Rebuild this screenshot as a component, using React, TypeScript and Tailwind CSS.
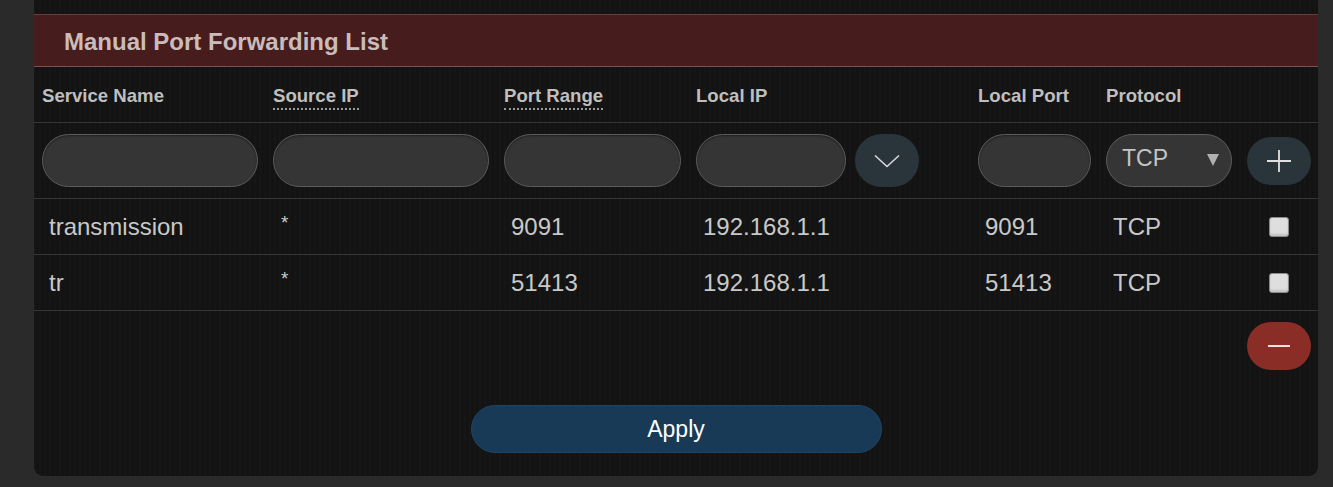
import React from "react";

const cols = "grid grid-cols-[231px_231px_192px_282px_128px_141px_79px]";

function Field({ w }: { w: string }) {
  return (
    <div
      className={`${w} h-[53px] rounded-full bg-[#353535] border border-[#5c5c5c] shadow-[inset_0_1px_2px_rgba(0,0,0,0.4)]`}
    />
  );
}

function Check() {
  return (
    <div className="w-[20px] h-[20px] rounded-[3px] bg-[#dedede] border border-[#8a8a8a] shadow-[inset_0_-2px_2px_rgba(0,0,0,0.12)]" />
  );
}

export default function App() {
  const rows = [
    ["transmission", "*", "9091", "192.168.1.1", "9091", "TCP"],
    ["tr", "*", "51413", "192.168.1.1", "51413", "TCP"],
  ];
  return (
    <div
      className="w-full h-[487px] bg-[#2a2a2a] pl-[34px] pr-[15px] pb-[11px] flex"
      style={{ fontFamily: '"Liberation Sans", Arial, sans-serif' }}
    >
      <div className="flex-1 flex flex-col rounded-b-[9px] bg-[#131313] bg-[repeating-linear-gradient(90deg,rgba(255,255,255,0.012)_0px,rgba(255,255,255,0.012)_2px,rgba(0,0,0,0)_2px,rgba(0,0,0,0)_5px)] pt-[14px]">
        {/* title band */}
        <div className="h-[53px] flex items-center pl-[30px] pt-[2px] bg-[#471c1c] border-t border-t-[#6a3b3b] border-b border-b-[#7a5252]">
          <span className="text-[24px] font-bold text-[#cbbcbc] leading-none">
            Manual Port Forwarding List
          </span>
        </div>

        {/* header row */}
        <div className={`${cols} h-[56px] items-center pt-[3px] border-b border-[#353535] text-[18.6px] font-bold text-[#bfbfbf]`}>
          <div className="pl-[8px]">Service Name</div>
          <div className="pl-[8px]">
            <span className="inline-block leading-none border-b-2 border-dotted border-[#9a9a9a] pb-[2px]">Source IP</span>
          </div>
          <div className="pl-[8px]">
            <span className="inline-block leading-none border-b-2 border-dotted border-[#9a9a9a] pb-[2px]">Port Range</span>
          </div>
          <div className="pl-[8px]">Local IP</div>
          <div className="pl-[8px]">Local Port</div>
          <div className="pl-[8px]">Protocol</div>
          <div />
        </div>

        {/* input row */}
        <div className={`${cols} h-[76px] items-center border-b border-[#353535]`}>
          <div className="pl-[8px]"><Field w="w-[216px]" /></div>
          <div className="pl-[8px]"><Field w="w-[216px]" /></div>
          <div className="pl-[8px]"><Field w="w-[177px]" /></div>
          <div className="pl-[8px] flex items-center gap-[9px]">
            <Field w="w-[150px]" />
            <div className="w-[64px] h-[53px] rounded-full bg-[#29343b] flex items-center justify-center">
              <svg width="26" height="14" viewBox="0 0 26 14" fill="none">
                <path d="M1 1.5 L13 12.5 L25 1.5" stroke="#d8d8d8" strokeWidth="1.6" />
              </svg>
            </div>
          </div>
          <div className="pl-[8px]"><Field w="w-[113px]" /></div>
          <div className="pl-[8px]">
            <div className="w-[126px] h-[53px] rounded-full bg-[#353535] border border-[#5c5c5c] flex items-center pl-[15px] pr-[12px] pb-[4px]">
              <span className="flex-1 text-[23px] text-[#c4c4c4] leading-none">TCP</span>
              <svg width="12" height="12" viewBox="0 0 12 12" className="mt-[3px]">
                <path d="M0 0 L12 0 L6 12 Z" fill="#b0b0b0" />
              </svg>
            </div>
          </div>
          <div className="flex justify-center">
            <div className="w-[64px] h-[48px] rounded-full bg-[#29343b] flex items-center justify-center">
              <svg width="26" height="24" viewBox="0 0 26 24">
                <path d="M1 12 H25 M13 1 V23" stroke="#e0e0e0" strokeWidth="1.8" />
              </svg>
            </div>
          </div>
        </div>

        {/* data rows */}
        {rows.map((r, i) => (
          <div key={i} className={`${cols} h-[56px] items-center border-b border-[#353535] text-[24px] text-[#c9c9c9]`}>
            {r.map((c, j) =>
              c === "*" ? (
                <div key={j} className="pl-[16px] leading-none text-[19px] -translate-y-[4px]">{c}</div>
              ) : (
                <div key={j} className="pl-[15px] leading-none">{c}</div>
              )
            )}
            <div className="flex justify-center">
              <Check />
            </div>
          </div>
        ))}

        {/* minus */}
        <div className="flex justify-end pr-[7px] mt-[11px]">
          <div className="w-[64px] h-[48px] rounded-full bg-[#8a2d27] flex items-center justify-center">
            <div className="w-[22px] h-[2px] bg-[#f0e0e0]" />
          </div>
        </div>

        {/* apply */}
        <div className="flex justify-center mt-[35px]">
          <div className="w-[411px] h-[48px] rounded-full bg-[#183a57] border border-[#1f4565] flex items-center justify-center text-[23px] text-white">
            Apply
          </div>
        </div>
      </div>
    </div>
  );
}
